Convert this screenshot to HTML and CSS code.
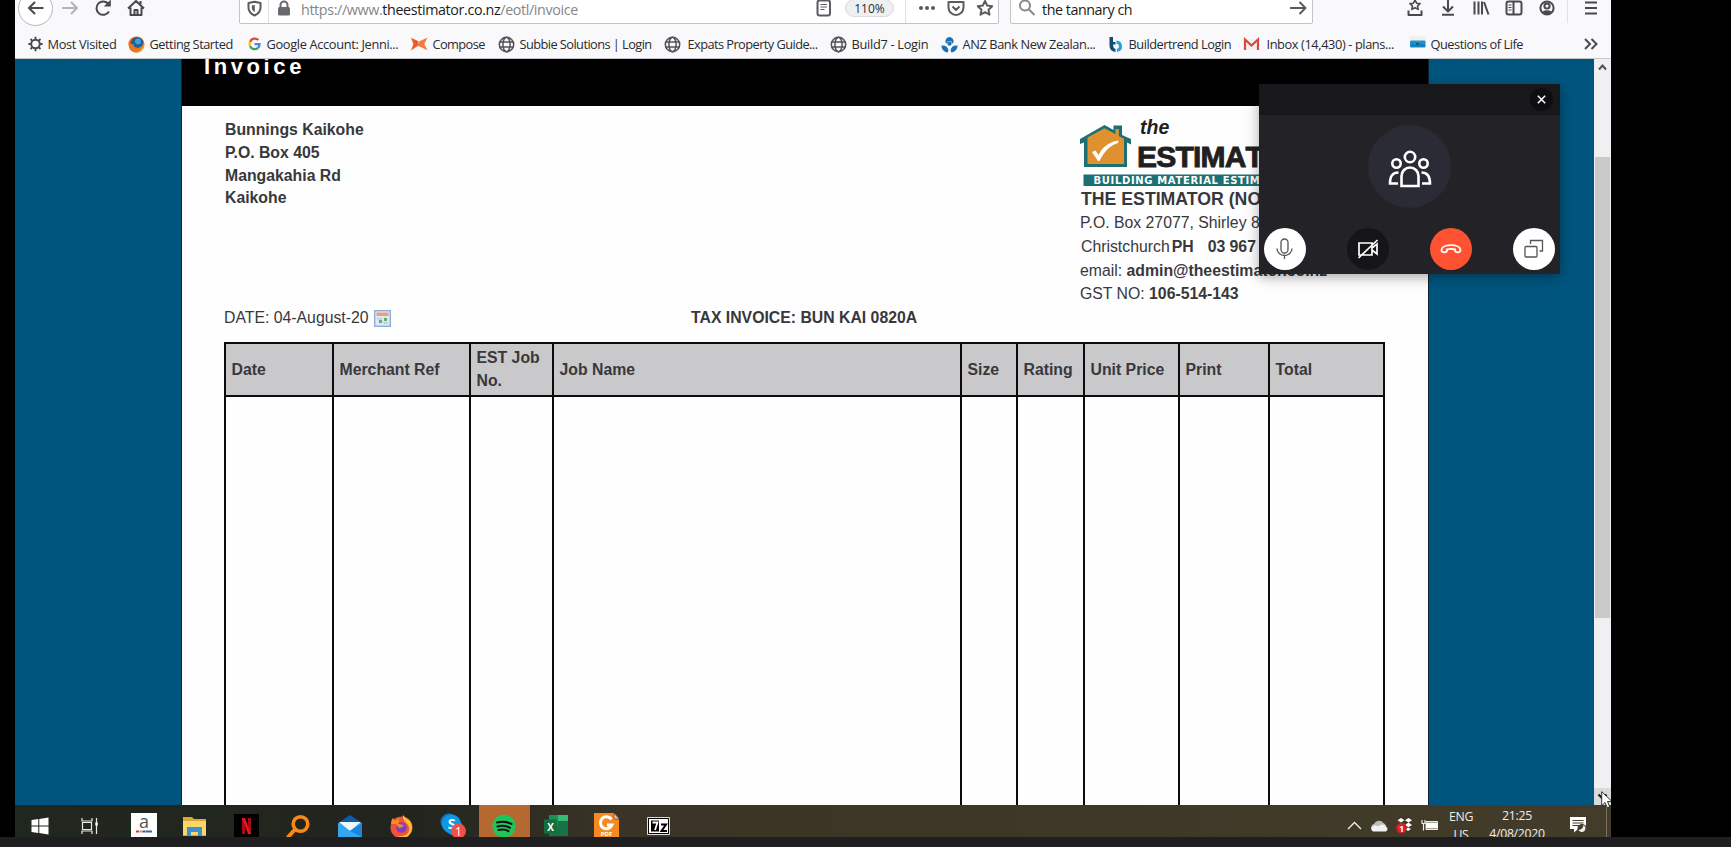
FILE: index.html
```html
<!DOCTYPE html>
<html lang="en">
<head>
<meta charset="utf-8">
<title>Invoice</title>
<link rel="stylesheet" href="styles.css">
</head>
<body>
<svg class="defs" width="0" height="0">
  <symbol id="globe" viewBox="0 0 17 17"><circle cx="8.5" cy="8.5" r="7.2"/><ellipse cx="8.5" cy="8.5" rx="3.6" ry="7.2"/><path d="M1.5 6h14M1.5 11h14"/></symbol>
</svg>
<div class="screen">
  <div class="browser">
    <div class="toolbar">
      <div class="nav-buttons">
        <span class="cell back"><svg width="20" height="20" viewBox="0 0 20 20"><path d="M17.5 10H3M9 4l-6 6 6 6"/></svg></span>
        <span class="cell dim"><svg width="20" height="20" viewBox="0 0 20 20"><path d="M2 10h14.500M11 4l6 6-6 6"/></svg></span>
        <span class="cell"><svg width="20" height="20" viewBox="0 0 20 20"><path d="M16 13.500a6.700 6.700 0 1 1-.5-7.500"/><path d="M17.800 1.500v7h-7z" class="solid"/></svg></span>
        <span class="cell"><svg width="20" height="20" viewBox="0 0 20 20"><path d="M2 10.500 10 3l8 7.500M4.500 9.500v7.500h11V9.500M14.500 6V3"/><path d="M8.500 17v-5h3v5" /></svg></span>
      </div>
      <div class="url-box">
        <svg class="shield" width="15" height="17" viewBox="0 0 15 17"><path d="M1.500 3 7.500 1.800 13.500 3v5c0 4-3 6-6 7.500C4.500 14 1.500 12 1.500 8z"/><path d="M7.800 5v7c-2-1-3-2.500-3-4.500V5.500z" class="solid"/></svg>
        <i class="bar"></i>
        <svg class="lock" width="14" height="16" viewBox="0 0 14 16"><path d="M3.500 8V5a3.500 3.500 0 0 1 7 0v3"/><rect x="1" y="7" width="12" height="8.500" rx="1.500" class="solid"/></svg>
        <span class="url"><span>https://www.</span><b>theestimator.co.nz</b><span>/eotl/invoice</span></span>
        <svg class="reader" width="16" height="18" viewBox="0 0 16 18"><rect x="1.500" y="1.500" width="12.500" height="15" rx="2"/><path d="M4.500 5.500h6.500M4.500 8h6.500M4.500 10.500h4" stroke-width="1.100"/></svg>
        <span class="zoom">110%</span>
        <i class="bar"></i>
        <svg class="dots" width="18" height="6" viewBox="0 0 18 6"><g class="solid"><circle cx="3" cy="3" r="2"/><circle cx="9" cy="3" r="2"/><circle cx="15" cy="3" r="2"/></g></svg>
        <svg class="pocket" width="18" height="17" viewBox="0 0 18 17"><path d="M1.500 2h15v5.500a7.500 7.500 0 0 1-15 0zM5.500 6.500 9 10l3.500-3.500"/></svg>
        <svg class="star" width="18" height="18" viewBox="0 0 18 18"><path d="m9 2 2.200 4.600 5 .6-3.700 3.500 1 5L9 13.200l-4.500 2.500 1-5L1.800 7.200l5-.6z"/></svg>
      </div>
      <div class="search-box">
        <svg width="18" height="18" viewBox="0 0 18 18" class="glass"><circle cx="7" cy="6.500" r="5"/><path d="m11 10.500 5.500 5.500"/></svg>
        <span class="query">the tannary ch</span>
        <svg width="18" height="16" viewBox="0 0 18 16"><path d="M1 8h15M10.500 2l6 6-6 6"/></svg>
      </div>
      <div class="tools">
        <span class="cell"><svg width="18" height="20" viewBox="0 0 18 20"><path d="m9 2 1.600 3.200 3.400.4-2.500 2.400.7 3.400L9 9.700l-3.200 1.700.7-3.400L4 5.600l3.400-.4z" stroke-width="1.600"/><path d="M2.500 12.500v4.500h13v-4.500" /></svg></span>
        <span class="cell"><svg width="16" height="20" viewBox="0 0 16 20"><path d="M8 2v11M3 8.500l5 5 5-5M2 16.800h12"/></svg></span>
        <span class="cell"><svg width="18" height="18" viewBox="0 0 18 18"><path d="M2.500 2.500v13M6.500 2.500v13M10 2.500v13M12 3l4.500 12.500"/></svg></span>
        <span class="cell"><svg width="18" height="18" viewBox="0 0 18 18"><rect x="1.500" y="2.500" width="15" height="13" rx="2"/><path d="M8.500 3v12"/><path d="M3.500 6h3M3.500 8.500h3M3.500 11h3" stroke-width="1"/></svg></span>
        <span class="cell"><svg width="18" height="18" viewBox="0 0 18 18"><circle cx="9" cy="9" r="6.600"/><circle cx="9" cy="7" r="2.600" /><path d="M4.500 12.500q4.500-2.500 9 0l-1.500 2q-3 1.500-6 0z" class="solid"/></svg></span>
        <i class="bar"></i>
        <span class="cell menu"><svg width="14" height="16" viewBox="0 0 14 16"><path d="M1 2.500h12M1 8h12M1 13.500h12"/></svg></span>
      </div>
    </div>
    <div class="bookmarks">
      <div class="mark"><svg width="15" height="16" viewBox="0 0 15 16"><g fill="none" stroke="#4a4a4e"><circle cx="7.500" cy="8" r="4.300" stroke-width="2"/><path d="M7.500 3.200V.8M7.500 12.800v2.400M2.800 8H.4M12.200 8h2.400M4.200 4.700 2.500 3M10.800 4.700 12.500 3M4.200 11.300 2.500 13M10.800 11.300l1.700 1.700" stroke-width="1.800"/></g></svg><span class="visited">Most Visited</span></div>
      <div class="mark"><svg width="17" height="17" viewBox="0 0 17 17"><circle cx="8.500" cy="8.500" r="8" fill="#e8601c"/><circle cx="9" cy="7.500" r="6.300" fill="#1c5f9c"/><circle cx="10" cy="5.500" r="3" fill="#3fa2d8"/><path d="M1 4c0 3 2 4.500 5 4.500-1 2 2 4 5 3 3-.5 4.500-4 4-7 2.500 5-.5 12-6.500 12S-.5 10 1 4z" fill="#ee7420"/><path d="M16 6c.5 5-3 9-7 10 5 0 8-4 7-10z" fill="#f9c53c"/></svg><span class="started">Getting Started</span></div>
      <div class="mark"><svg width="15" height="16" viewBox="0 0 14 16"><g fill="none" stroke-width="2.300"><path d="M10.800 4A5 5 0 0 0 2.600 5.800" stroke="#ea4335"/><path d="M2.600 5.800a5 5 0 0 0 0 4.400" stroke="#fbbc05"/><path d="M2.600 10.200A5 5 0 0 0 10.400 12" stroke="#34a853"/><path d="M10.400 12a5 5 0 0 0 1.600-3.800H7" stroke="#4285f4"/></g></svg><span class="google">Google Account: Jenni...</span></div>
      <div class="mark"><svg width="17" height="16" viewBox="0 0 18 16"><path d="M0 1.500 8 5l-1 5-7 5 2.500-7z" fill="#ef5a28"/><path d="M17.500 1 9 5 6.500 9.500l11 5L14 8z" fill="#f47b3c"/></svg><span class="compose">Compose</span></div>
      <div class="mark"><svg class="globe" width="17" height="17"><use href="#globe"/></svg><span class="subbie">Subbie Solutions | Login</span></div>
      <div class="mark wide"><svg class="globe" width="17" height="17"><use href="#globe"/></svg><span class="expats">Expats Property Guide...</span></div>
      <div class="mark"><svg class="globe" width="17" height="17"><use href="#globe"/></svg><span class="build7">Build7 - Login</span></div>
      <div class="mark"><svg width="17" height="17" viewBox="0 0 17 17"><g fill="#1f6fb2"><circle cx="8.500" cy="7.800" r="2"/><path d="M8.500 1a4.500 4.500 0 0 1 4 5.500l-2 1.500V5.500h-4V8l-2-1.500A4.500 4.500 0 0 1 8.500 1z"/><path d="M.5 9.500c4-.5 6.500 1.500 7 5l-1 2C3 16 .5 13.500.5 9.500zM16.500 9.500c-4-.5-6.500 1.500-7 5l1 2c3.500-.5 6-3 6-7z"/></g></svg><span class="anz">ANZ Bank New Zealan...</span></div>
      <div class="mark"><svg width="16" height="17" viewBox="0 0 15 17"><path d="M1 1h3.500v8q0 3 2.500 4v3Q1 15 1 9.500z" fill="#164a6e"/><path d="M4.500 6H7v2.500H4.500z" fill="#164a6e"/><path d="M8 4.500q5.500.5 5.500 6 0 4.500-5 5.500v-3q2-.7 2-2.700Q10.500 8 8 7.500z" fill="#23a0dc"/></svg><span class="trend">Buildertrend Login</span></div>
      <div class="mark wide"><svg width="17" height="16" viewBox="0 0 17 16"><path d="M1 3h15v11H1z" fill="#f3f0f0"/><path d="M2 14V3.500l6.500 6 6.500-6V14" fill="none" stroke="#d9483b" stroke-width="2.200"/></svg><span class="inbox">Inbox (14,430) - plans...</span></div>
      <div class="mark"><svg width="16" height="16" viewBox="0 0 16 16"><path d="M0 0h16v4H0z" fill="#f3eff0"/><rect y="4.500" width="15.500" height="7" rx="1" fill="#1f8fcc"/><path d="M1 8.500h14v2H1z" fill="#157ab3"/><path d="M6 7h3v1.500H6z" fill="#174a75"/></svg><span class="life">Questions of Life</span></div>
      <svg class="more" width="16" height="14" viewBox="0 0 16 14"><path d="m2 2 5 5-5 5M8.500 2l5 5-5 5"/></svg>
    </div>
    <div class="viewport">
      <main class="sheet">
        <h1>Invoice</h1>
        <div class="parties">
          <address class="client">Bunnings Kaikohe<br>P.O. Box 405<br>Mangakahia Rd<br>Kaikohe</address>
          <div class="company">
            <svg class="logo" width="300" height="81" viewBox="0 0 300 81">
              <path d="M4 61V36.500L0 38v-5L24.500 19l9 5v-4.500h8.500V29l9 4v5.500L47 36.500V61z" fill="#1d7072"/>
              <path d="M7.500 58V31.500l17-9.300 11 6V23h3.300v7l5.200 2.700V58z" fill="#e0912f"/>
              <path d="m12 46 3.500-1.500 3 4.500c4-8 9-11 15-13.500l5-1-.5 2.500C29 40 24 46 19.500 55h-1.500z" fill="#fff"/>
              <text x="60" y="27.500" class="logo-the">the</text>
              <text x="57" y="60.800" class="logo-name">ESTIMATOR</text>
              <rect x="3.500" y="68.500" width="240" height="11.500" fill="#1d7072"/>
              <text x="13.500" y="77.700" class="logo-tag">BUILDING MATERIAL ESTIMATES</text>
            </svg>
            <div class="company-name">THE ESTIMATOR (NORTH)</div>
            <div>P.O. Box 27077, Shirley 8061</div>
            <div class="phone">Christchurch<b>PH</b><b>03 967 4800</b></div>
            <div>email: <b>admin@theestimator.co.nz</b></div>
            <div class="gst">GST NO: <b>106-514-143</b></div>
          </div>
        </div>
        <div class="meta">
          <span>DATE: 04-August-20
            <svg width="17" height="17" viewBox="0 0 17 17"><rect x=".7" y=".7" width="15.600" height="15.600" fill="#dfe9f4" stroke="#86a8dc" stroke-width="1.300"/><path d="M2.500 2.500h12V6h-12z" fill="#f0a070"/><path d="M10 8h3v3h-3zM5 10h3v3H5z" fill="#5fb06a"/><path d="M3 8h5v1.500H3zM9.500 12h4v2h-4z" fill="#b4cce4"/></svg></span>
          <b>TAX INVOICE: BUN KAI 0820A</b>
        </div>
        <div class="items">
          <b>Date</b><b>Merchant Ref</b><b>EST Job No.</b><b>Job Name</b><b>Size</b><b>Rating</b><b>Unit Price</b><b>Print</b><b>Total</b>
          <i></i><i></i><i></i><i></i><i></i><i></i><i></i><i></i><i></i>
        </div>
      </main>
      <div class="scrollbar">
        <svg width="17" height="17" viewBox="0 0 17 17"><path d="m5 10.500 3.500-4 3.500 4"/></svg>
        <div class="thumb"></div>
        <svg class="down" width="17" height="17" viewBox="0 0 17 17"><path d="m4.500 6.500 4 4 4-4"/></svg>
      </div>
    </div>
  </div>
  <div class="taskbar">
    <span class="task start"><svg width="18" height="18" viewBox="0 0 18 18"><path d="M.5 3 7.300 2v6.500H.5zM8.300 1.900 17.500.5v8H8.300zM.5 9.500h6.800V16L.5 15zM8.300 9.500h9.200v8l-9.200-1.400z" fill="#fff"/></svg></span>
    <span class="task view"><svg width="18" height="18" viewBox="0 0 18 18" fill="none" stroke="#e8e8e6" stroke-width="1.200"><path d="M1 1v3h10V1M1 17v-3h10v3M1.500 5.500h9v7h-9zM15.500 1v16"/><path d="M14.300 5.500h2.500v3h-2.500z" fill="#fff" stroke="none"/></svg></span>
    <span class="task"><svg width="26" height="26" viewBox="0 0 26 26"><path fill="#fff" d="M0 0h26v26H0z"/><text x="13" y="15" class="a-letter">a</text><g stroke-width="2"><path d="M5 18.500h3" stroke="#d33"/><path d="M8.500 18.500h2.500" stroke="#e90"/><path d="M11.500 18.500h3" stroke="#448"/><path d="M15 18.500h6" stroke="#36a"/></g></svg></span>
    <span class="task"><svg width="24" height="24" viewBox="0 0 24 24"><path d="M0 3h9l2 2h12v17H0z" fill="#e0a52e"/><path d="M0 7h23v14H0z" fill="#fbd668"/><path d="M4 22v-9h15v9h-4v-4H8v4z" fill="#3f8fd2"/></svg></span>
    <span class="task"><svg width="25" height="25" viewBox="0 0 25 25"><path d="M0 0h25v25H0z"/><path d="M8 4h3v16H8zM14 4h3v16h-3z" fill="#a50c13"/><path d="M8 4h3l6 16h-3z" fill="#e8141c"/></svg></span>
    <span class="task"><svg width="24" height="25" viewBox="0 0 24 25"><g fill="none" stroke="#fa8a16"><circle cx="14.500" cy="10" r="7.300" stroke-width="3.600"/><path d="m9 15.500-6.500 7" stroke-width="4" stroke-linecap="round"/></g></svg></span>
    <span class="task"><svg width="24" height="24" viewBox="0 0 24 24"><path d="M0 9 12 1l12 8v4H0z" fill="#0b5cab"/><path d="M0 9h24v14H0z" fill="#2fa5ec"/><path d="M1 8h22l-11 9z" fill="#f1f6fa"/><path d="m0 9 12 8 12-8v14H0z" fill="#33a8f0"/><path d="m12 17 12-8v14z" fill="#1b84dc"/></svg></span>
    <span class="task"><svg width="25" height="25" viewBox="0 0 25 25"><circle cx="12.500" cy="13.500" r="11" fill="#f5503c"/><path d="M14 1c2 2 3 4 6 5 4 4 4 11 0 15-3 3-8 3.500-11 1 8 1 12-3 11-9-2-5-7-6-6-12z" fill="#fdc02f"/><path d="M2 10c0-3 1-5 2-6l2 3 4-3v5l4 1z" fill="#fb8b28"/><circle cx="12.500" cy="13.500" r="5.200" fill="#7b3fc4"/><path d="M7 10c4-1 5 1 8 1-1 2-3 3-5 3z" fill="#fa8231"/></svg></span>
    <span class="task"><svg width="26" height="26" viewBox="0 0 26 26"><circle cx="9" cy="9" r="8.500" fill="#0a78c8"/><circle cx="14" cy="14" r="8.500" fill="#0a86d8"/><circle cx="11.500" cy="11" r="9.500" fill="#0f96e4"/><text x="11.500" y="16" class="skype-letter">S</text><circle cx="18.500" cy="18" r="7.500" fill="#ee5147"/><text x="18.500" y="22.500" class="badge">1</text></svg></span>
    <span class="task active"><svg width="24" height="24" viewBox="0 0 24 24"><circle cx="12" cy="12" r="11.500" fill="#21c45a"/><path d="M5 8.500q8-2 14.500 1.500M5.500 12.500q7-1.800 12.500 1.300M6.500 16q6-1.300 10 1.200" fill="none" stroke="#111" stroke-width="2" stroke-linecap="round"/></svg></span>
    <span class="task"><svg width="26" height="24" viewBox="0 0 26 24"><path d="M6 1h19v21H6z" fill="#1d8f56"/><path d="M15 1h10v6H15z" fill="#35bb74"/><path d="M15 7h10v6H15zM6 13h19v9H6z" fill="#177245"/><path d="M1 5.500h13v14H1z" fill="#12703f"/><text x="7.500" y="16.500" class="xl">X</text></svg></span>
    <span class="task"><svg width="26" height="26" viewBox="0 0 26 26"><path d="M0 0h20l5 5v21H0z" fill="#f58a20"/><path d="M20 0v6h5z" fill="#fbc48a" stroke="#333" stroke-width=".6"/><path d="M17.500 6.500a6 6 0 1 0 .5 5.500h-5" fill="none" stroke="#fff" stroke-width="3"/><text x="12.500" y="23" class="pdf">PDF</text></svg></span>
    <span class="task"><svg width="24" height="18" viewBox="0 0 24 18"><path d="M1.500 1.500h20v15h-20z" fill="#fff" stroke="#000"/><path d="M.5.500h22v17H.5z" fill="none" stroke="#ddd"/><path d="M4 3.500h8v11H4z"/><path d="M5.500 5.500h5L8 13" fill="none" stroke="#fff" stroke-width="1.800"/><path d="M14 7.500h5L14.500 14H20" fill="none" stroke="#000" stroke-width="2"/></svg></span>
    <div class="tray">
      <svg width="15" height="9" viewBox="0 0 15 9" class="up"><path d="m1 8 6.500-6.500L14 8"/></svg>
      <svg width="18" height="13" viewBox="0 0 18 13"><path d="M4 12a3.600 3.600 0 0 1 0-7 5.500 5.500 0 0 1 9.500-1A4.500 4.500 0 0 1 14 12z" fill="#bcbcba"/><path d="M3 12.500q-3.500-3 0-5.500 3-1 5 .5 5-4 8 0 3 2.500 0 5z" fill="#f2f2f0"/></svg>
      <svg width="17" height="17" viewBox="0 0 17 17"><path d="m5 1 3.500 2.300L5 5.600 1.500 3.300zM12.500 1 16 3.300l-3.500 2.300L9 3.300zM12.500 5.600 16 8l-3.500 2.300L9 8zM12 10.500l3 1.500-3 2-3-2z" fill="#fff"/><circle cx="5.500" cy="11" r="5.300" fill="#d81f2a"/><text x="5.500" y="14.500" class="box-badge">1</text></svg>
      <svg width="18" height="12" viewBox="0 0 18 12"><path d="M5 3.500h11.500v6H5z" fill="#fff"/><path d="M5 2.500h11.500v8H5z" fill="none" stroke="#eee"/><path d="M1 1v3.500h3V1M2.500 4.500v7" fill="none" stroke="#eee" stroke-width="1.200"/></svg>
      <span class="lang">ENG<br>US</span>
      <span class="clock">21:25<br>4/08/2020</span>
      <svg class="notes" width="18" height="18" viewBox="0 0 18 18"><path d="M1 1h16v12H9l-4 3.500V13H1z" fill="#fff"/><path d="M3.500 4.500h11M3.500 7h11M3.500 9.500h7" stroke="#443d2b"/><circle cx="13" cy="12.500" r="4.500" fill="#443d2b"/><path d="M14.500 9a3.700 3.700 0 1 1-5 5q4.500-.5 5-5z" fill="#eee"/></svg>
      <i class="desktop-edge"></i>
    </div>
  </div>
  <div class="call">
    <div class="call-top"><span class="close"><svg width="9" height="9" viewBox="0 0 9 9"><path d="m.8.8 7.400 7.400M8.200.8.800 8.200"/></svg></span></div>
    <div class="avatar"><svg width="44" height="38" viewBox="0 0 44 38"><circle cx="22" cy="7" r="5.200"/><circle cx="8.500" cy="13.500" r="4.200"/><circle cx="35.500" cy="13.500" r="4.200"/><path d="M13.500 36V26a8.500 8.500 0 0 1 17 0v10z"/><path d="M10.500 22.500C4.500 22.500 2 26 2 33.500h8M33.500 22.500c6 0 8.500 3.500 8.500 11h-8"/></svg></div>
    <div class="controls">
      <span class="round"><svg width="17" height="22" viewBox="0 0 17 22"><rect x="5" y="1" width="7" height="14" rx="3.500"/><path d="M1 10.500a7.500 7 0 0 0 15 0M8.500 17.500V21"/></svg></span>
      <span class="round dark"><svg width="22" height="20" viewBox="0 0 22 20"><path d="M2 4h13v12H2zM15 9l5-4v10l-5-4M1.500 19 20.500 1"/></svg></span>
      <span class="round red"><svg width="22" height="10" viewBox="0 0 22 10"><path d="M1.500 6.500C1.500 3 6 1.200 11 1.200S20.500 3 20.500 6.500c0 2-4.500 2.500-5.500.5V5.300q-4-1-8 0V7c-1 2-5.500 1.500-5.500-.5z"/></svg></span>
      <span class="round"><svg width="20" height="20" viewBox="0 0 20 20"><rect x="1" y="7.500" width="12" height="10.500" rx="1"/><path d="M6.500 5V1.500h12V12H15.500"/></svg></span>
    </div>
  </div>
  <svg class="cursor" width="12" height="18" viewBox="0 0 12 18"><path d="M.7.700v14L4 11.500l2.300 5.300 2.400-1L6.500 10.500H11z" fill="#fff" stroke="#222" stroke-width=".9"/></svg>
</div>
</body>
</html>
```
FILE: styles.css
```css
* { box-sizing: border-box; }
body { margin: 0; width: 1731px; height: 847px; overflow: hidden; background: #000; border-bottom: 10px solid #1f1f21; font-family: "Liberation Sans", Arial, sans-serif; }
svg { display: block; flex: none; }
i { display: block; }
.defs { position: absolute; }
.screen { position: relative; width: 1596px; height: 837px; margin-left: 15px; overflow: hidden; display: flex; flex-direction: column; }
.browser { height: 805px; overflow: hidden; background: #f9f9fb; flex: none; font-family: "Open Sans", "Noto Sans", sans-serif; }

/* toolbar, its upper part runs off the top of the screen */
.toolbar { height: 48px; margin-top: -16px; display: flex; align-items: center; color: #4a4a4e; }
.toolbar svg { fill: none; stroke: currentColor; stroke-width: 2; stroke-linejoin: round; }
.toolbar .solid { fill: currentColor; stroke: none; }
.nav-buttons { display: flex; width: 224px; padding-left: 3px; flex: none; }
.cell { width: 33px; height: 35px; flex: none; display: flex; align-items: center; justify-content: center; }
.cell.back { width: 35px; border: 1px solid #b8b8bc; border-radius: 50%; background: #fff; }
.dim { color: #b4b4b8; }
.bar { width: 1px; height: 30px; background: #e0e0e3; flex: none; }
.url-box, .search-box { height: 31px; background: #fff; border: 1px solid #c4c4c8; border-radius: 2px; display: flex; align-items: center; flex: none; font-size: 14.3px; }
.url-box { width: 760px; padding-left: 7px; color: #5c5c60; }
.shield { margin-right: 6px; }
.lock { margin: 0 10px 0 8px; color: #6a6a6e; }
.url { width: 515px; padding-top: 2px; white-space: nowrap; color: #86868a; letter-spacing: -.37px; }
.url b { font-weight: 400; color: #1c1c20; }
.zoom { width: 49px; height: 18px; margin: 0 11px 0 13px; border: 1px solid #dcdce0; border-radius: 9px; background: #f0f0f3; font-size: 12px; line-height: 17px; text-align: center; color: #2c2c30; }
.dots { margin: 0 11px 0 12px; }
.pocket { margin-right: 11px; }
.search-box { width: 303px; margin-left: 11px; padding: 0 5px 0 7px; color: #5c5c60; }
.glass { color: #88888c; }
.query { margin-left: 6px; padding-top: 2px; flex: 1; color: #1c1c20; letter-spacing: -.45px; }
.tools { display: flex; align-items: center; margin-left: 85px; }
.tools .bar { margin-left: 4px; }
.tools .menu { width: 45px; }

.bookmarks { height: 27px; padding: 0 0 2px 13px; border-bottom: 1px solid #c8c8cc; display: grid; grid-template-columns: 100px 119px 164px 87px 166px 166px 111px 167px 135px 167px 173px 20px; align-items: center; font-size: 12.800px; line-height: 18px; color: #2a2a2e; white-space: nowrap; }
.mark { display: flex; align-items: center; gap: 4.500px; }
.mark.wide { gap: 6.500px; }
.globe { fill: none; stroke: #525256; stroke-width: 1.500; }
.more { fill: none; stroke: #4a4a4e; stroke-width: 2; }
.visited, .google { letter-spacing: -.34px; }
.started, .life { letter-spacing: -.48px; }
.compose { letter-spacing: -.6px; }
.subbie, .expats { letter-spacing: -.56px; }
.build7 { letter-spacing: -.3px; }
.anz, .inbox { letter-spacing: -.4px; }
.trend { letter-spacing: -.48px; }

.viewport { height: 746px; display: flex; background: #00557f; }
.sheet { width: 1248px; height: 746px; margin-left: 166px; background: #fefefe; border: solid #10202c; border-width: 0 1px; overflow: hidden; font: 15.8px/22.7px "Liberation Sans", Arial, sans-serif; color: #38383c; }
h1 { margin: 0; height: 47px; padding-left: 22px; background: #000; color: #fff; font-size: 22px; line-height: 15px; letter-spacing: 3.600px; }
.parties { height: 200.700px; padding-left: 43px; display: grid; grid-template-columns: 855px auto; }
.client { padding-top: 13.200px; font-style: normal; font-weight: 700; }
.company { line-height: 23.800px; white-space: nowrap; }
.company-name { height: 24.300px; padding: .5px 0 0 1px; font-size: 17.700px; font-weight: 700; }
.phone { padding-left: 1px; }
.phone b { margin-left: 2px; }
.phone b + b { margin-left: 14px; }
.gst { line-height: 22px; }
.logo-the { font: italic bold 19.500px "Liberation Sans", Arial, sans-serif; fill: #231f20; }
.logo-name { font: bold 30px "Liberation Sans", Arial, sans-serif; font-kerning: none; letter-spacing: -.8px; fill: #231f20; stroke: #231f20; stroke-width: .9px; }
.logo-tag { font: bold 10px "DejaVu Sans", sans-serif; letter-spacing: .65px; fill: #fff; }
.meta { padding-left: 42px; height: 35.300px; display: grid; grid-template-columns: 467px auto; }
.meta span { display: flex; gap: 5px; align-items: center; height: 22.700px; }

/* grid gaps show the black background as ruled lines */
.items { width: 1161px; height: 480px; margin-left: 42px; padding: 2px; background: #0c0c0c; display: grid; gap: 2px; grid-template: 51px 1fr / 106px 135px 81px 406px 54px 65px 93px 88px 113px; }
.items b { padding: 1px 4px 0 5.500px; background: #c9c8ca; display: flex; align-items: center; }
.items i { background: #fefefe; }

.scrollbar { width: 17px; margin-left: auto; background: #f0eff1; display: flex; flex-direction: column; align-items: center; fill: none; stroke: #505054; stroke-width: 2; }
.thumb { width: 15px; height: 461px; margin-top: 81px; background: #cacaca; }
.down { margin-top: auto; background: #dadada; stroke: #111; }

.taskbar { height: 40px; flex: none; display: flex; background: linear-gradient(90deg, #20271f 0, #22251e 25%, #3a3426 38%, #433c2a 100%); }
.task { width: 51.500px; flex: none; display: flex; align-items: center; justify-content: center; padding-top: 2px; }
.task.start { width: 50px; }
.task.view { width: 53px; padding-right: 4px; }
.task.active { width: 51px; margin-right: .5px; background: #b5682f; }
.a-letter { font: 18px "Open Sans", sans-serif; fill: #555; text-anchor: middle; }
.skype-letter { font: bold 14px "Open Sans", sans-serif; fill: #fff; text-anchor: middle; }
.badge { font: 12px "Open Sans", sans-serif; fill: #fff; text-anchor: middle; }
.xl { font: bold 10px "Open Sans", sans-serif; fill: #fff; text-anchor: middle; }
.pdf { font: bold 6px "Open Sans", sans-serif; fill: #fff; text-anchor: middle; }
.box-badge { font: bold 9px "Open Sans", sans-serif; fill: #fff; text-anchor: middle; }
.tray { margin-left: auto; padding-right: 4px; display: flex; align-items: center; gap: 8px; color: #eeeeea; font: 12.300px/18px "Open Sans", "Noto Sans", sans-serif; letter-spacing: -.3px; text-align: center; }
.up { fill: none; stroke: #eee; stroke-width: 1.400; }
.lang { width: 26px; margin: 2px 0 0 1px; }
.clock { width: 60px; margin: 0 14px 0 5px; }
.desktop-edge { width: 1px; height: 40px; margin-left: 11px; background: #79735f; }

/* call window floating over the page */
.call { position: absolute; left: 1244px; top: 84px; width: 301px; height: 190px; background: #232227; box-shadow: 0 3px 12px rgba(0, 0, 0, .35); display: flex; flex-direction: column; align-items: center; }
.call svg { fill: none; stroke: #fff; stroke-width: 2.600; }
.call-top { width: 301px; height: 31px; background: #18181a; display: flex; justify-content: flex-end; align-items: center; padding-right: 7px; flex: none; }
.close { width: 23px; height: 23px; border-radius: 50%; background: #0e0e10; display: flex; align-items: center; justify-content: center; }
.call .close svg { stroke-width: 1.500; }
.avatar { width: 83px; height: 83px; margin-top: 10px; border-radius: 50%; background: #2a2b35; display: flex; align-items: center; justify-content: center; padding-top: 5px; }
.controls { width: 292px; margin-top: 20px; display: flex; justify-content: space-between; }
.round { width: 42px; height: 42px; border-radius: 50%; background: #fff; display: flex; align-items: center; justify-content: center; }
.call .round svg { stroke: #55555a; stroke-width: 1.300; }
.round.dark { background: #151518; }
.call .dark svg { stroke: #fff; stroke-width: 1.700; }
.round.red { background: #ff5233; }
.call .red svg { stroke: #fff; stroke-width: 1.800; }
.cursor { position: absolute; left: 1586px; top: 791px; }
```
